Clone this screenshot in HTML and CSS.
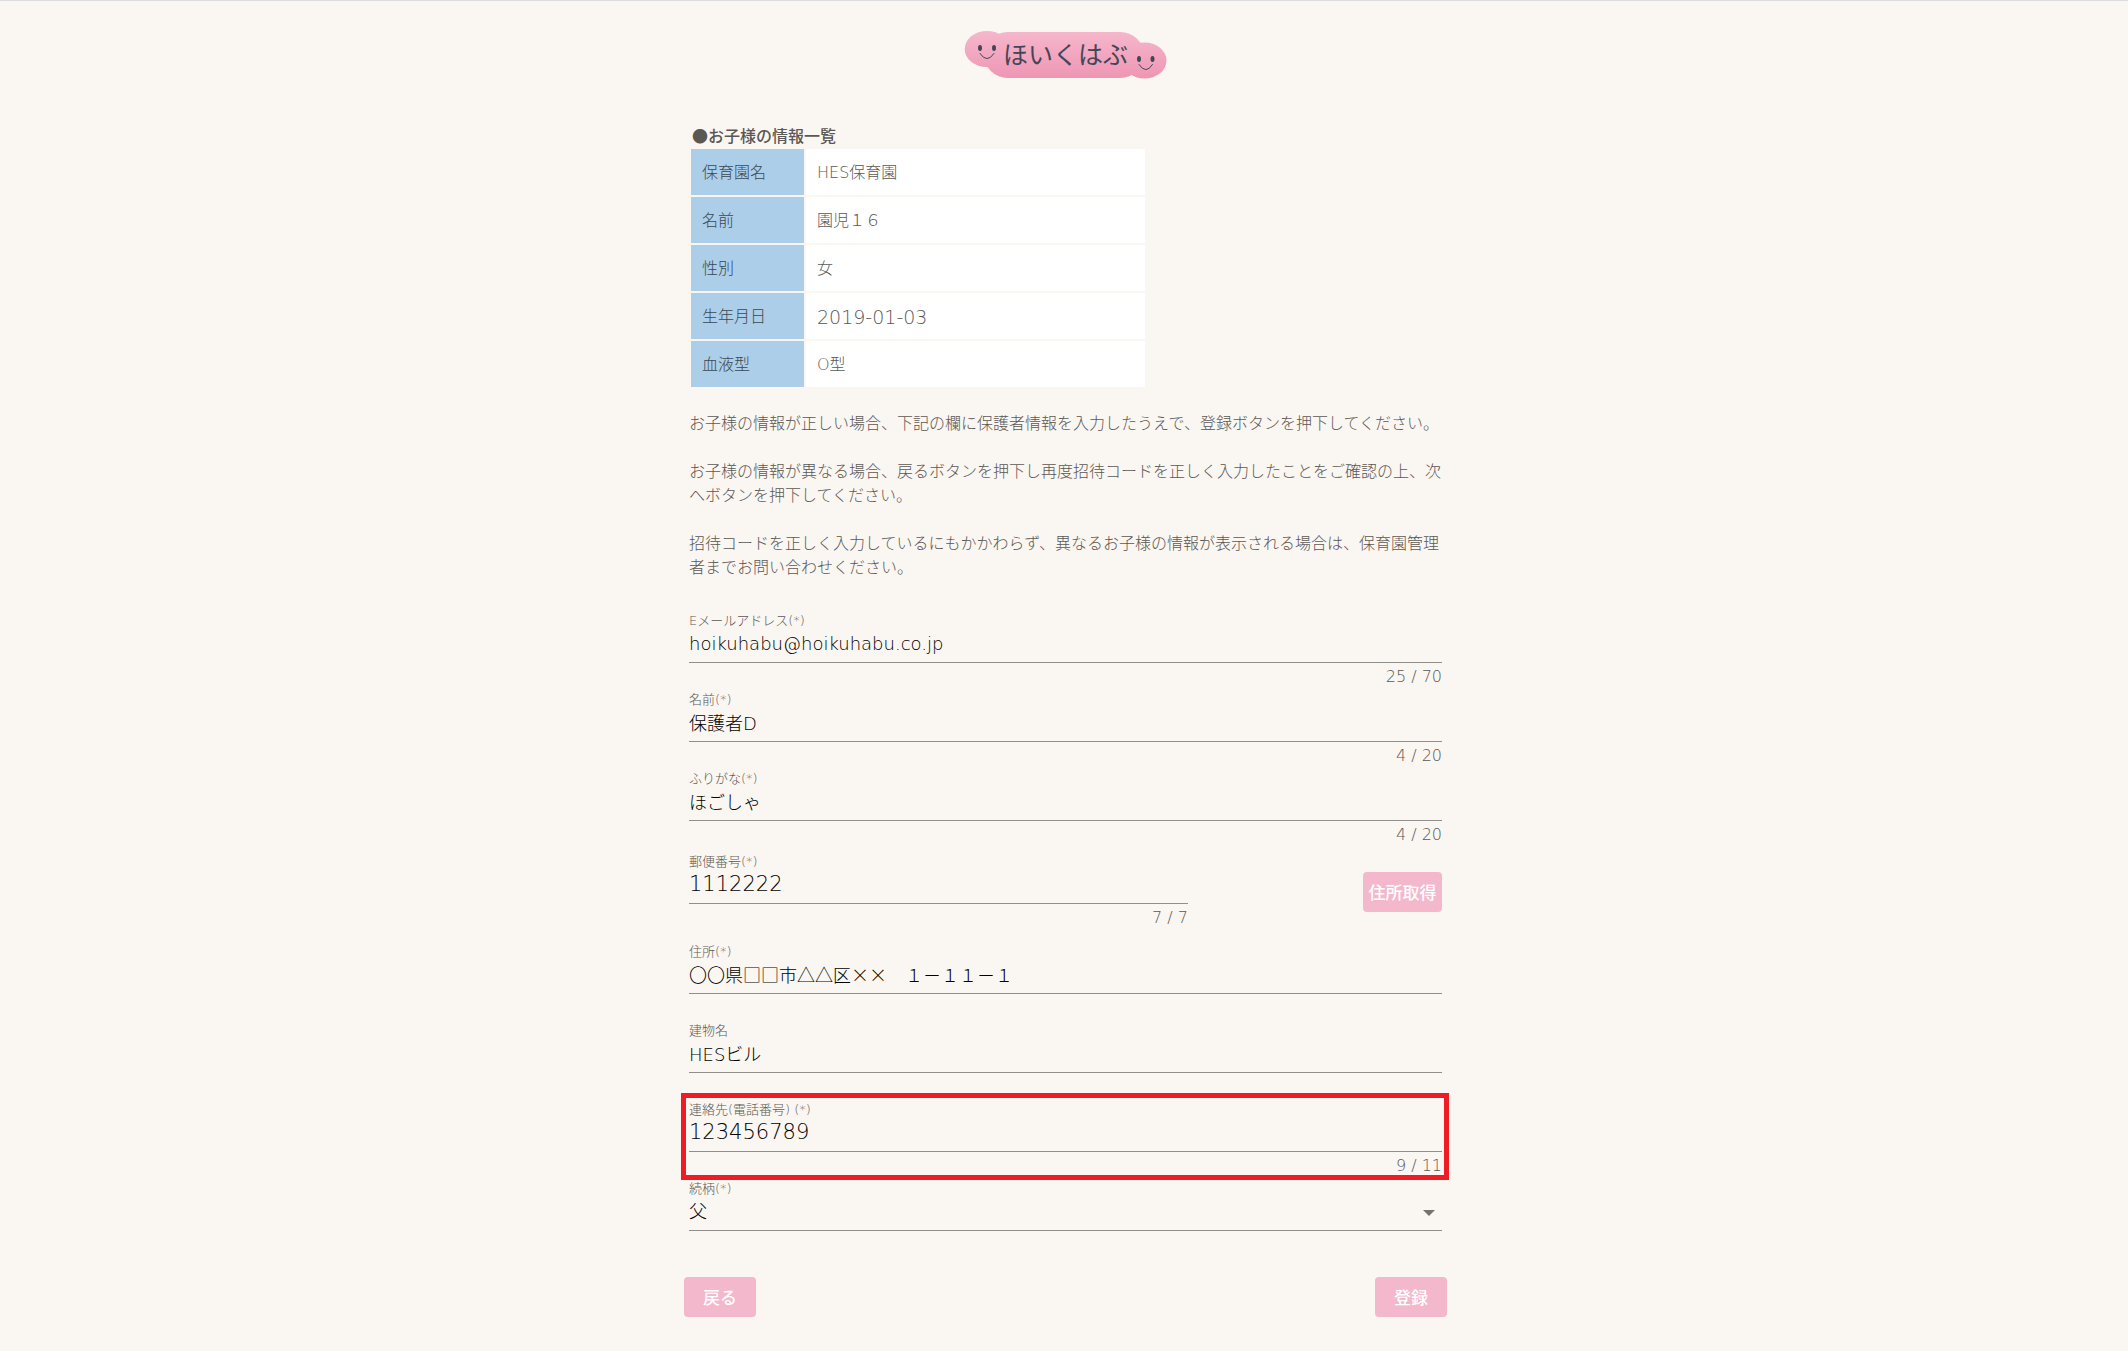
FILE: index.html
```html
<!DOCTYPE html>
<html lang="ja">
<head>
<meta charset="utf-8">
<title>ほいくはぶ</title>
<meta name="viewport" content="width=device-width, initial-scale=1">
<link rel="stylesheet" href="styles.css">
</head>
<body>
<header class="header">
  <svg class="logo" viewBox="0 0 206 50" role="img" aria-label="ほいくはぶ">
    <defs>
      <linearGradient id="pink" gradientUnits="userSpaceOnUse" x1="0" y1="0" x2="0" y2="50">
        <stop offset="0" stop-color="#f5b8cd"/>
        <stop offset="1" stop-color="#ee95b2"/>
      </linearGradient>
    </defs>
    <g fill="url(#pink)">
      <ellipse cx="26" cy="19" rx="22.3" ry="18"/>
      <rect x="23" y="2" width="160" height="46" rx="24" ry="23"/>
      <ellipse cx="183.5" cy="30.5" rx="22" ry="18"/>
    </g>
    <g fill="#434656">
      <ellipse cx="19" cy="18" rx="2" ry="3"/>
      <ellipse cx="33" cy="18" rx="2" ry="3"/>
      <ellipse cx="178" cy="29" rx="2" ry="3"/>
      <ellipse cx="191.500" cy="29" rx="2" ry="3"/>
    </g>
    <g fill="none" stroke="#434656" stroke-width="1" stroke-linecap="round">
      <path d="M19 23.500Q26 34 33 23.500"/>
      <path d="M178 34.500Q185 45 191.500 34.500"/>
    </g>
    <text class="logo-text" x="42" y="34">ほいくはぶ</text>
  </svg>
</header>
<main class="page">
  <section class="content">
    <h1 class="title">●お子様の情報一覧</h1>
    <table class="child">
      <tr><th scope="row">保育園名</th><td>HES保育園</td></tr>
      <tr><th scope="row">名前</th><td>園児１６</td></tr>
      <tr><th scope="row">性別</th><td>女</td></tr>
      <tr><th scope="row">生年月日</th><td class="date">2019-01-03</td></tr>
      <tr><th scope="row">血液型</th><td>O型</td></tr>
    </table>
    <div class="notes">
      <p>お子様の情報が正しい場合、下記の欄に保護者情報を入力したうえで、登録ボタンを押下してください。</p>
      <p>お子様の情報が異なる場合、戻るボタンを押下し再度招待コードを正しく入力したことをご確認の上、次へボタンを押下してください。</p>
      <p>招待コードを正しく入力しているにもかかわらず、異なるお子様の情報が表示される場合は、保育園管理者までお問い合わせください。</p>
    </div>
  </section>
  <form>
    <div class="content">
      <div class="field">
        <label for="email">Eメールアドレス(*)</label>
        <input id="email" type="text" value="hoikuhabu@hoikuhabu.co.jp">
        <span class="counter">25 / 70</span>
      </div>
      <div class="field">
        <label for="name">名前(*)</label>
        <input id="name" type="text" value="保護者D">
        <span class="counter">4 / 20</span>
      </div>
      <div class="field">
        <label for="kana">ふりがな(*)</label>
        <input id="kana" type="text" value="ほごしゃ">
        <span class="counter">4 / 20</span>
      </div>
      <div class="postal">
        <div class="field">
          <label for="zip">郵便番号(*)</label>
          <input id="zip" class="number" type="text" value="1112222">
          <span class="counter">7 / 7</span>
        </div>
        <button class="btn btn-lookup" type="button">住所取得</button>
      </div>
      <div class="field">
        <label for="address">住所(*)</label>
        <input id="address" class="wide" type="text" value="〇〇県□□市△△区××　１－１１－１">
      </div>
      <div class="field">
        <label for="building">建物名</label>
        <input id="building" type="text" value="HESビル">
      </div>
      <div class="field field-marked">
        <label for="tel">連絡先(電話番号) (*)</label>
        <input id="tel" class="number" type="text" value="123456789">
        <span class="counter">9 / 11</span>
      </div>
      <div class="field">
        <label for="relation">続柄(*)</label>
        <select id="relation"><option>父</option></select>
        <svg class="arrow" viewBox="0 0 12 6" aria-hidden="true"><path d="M0 0h12L6 6z" fill="#757370"/></svg>
      </div>
    </div>
    <div class="actions">
      <button class="btn" type="button">戻る</button>
      <button class="btn" type="submit">登録</button>
    </div>
  </form>
</main>
</body>
</html>
```
FILE: styles.css
```css
* {
  box-sizing: border-box;
}

body {
  margin: 0;
  border-top: 1px solid #dcdcdf;
  background: #faf6f1;
  color: #5a5855;
  font-family: "DejaVu Sans Light", "DejaVu Sans", "Noto Sans CJK JP", sans-serif;
  font-size: 16px;
  font-weight: 300;
  line-height: 24px;
}

.header {
  display: flex;
  justify-content: center;
  padding: 29px 0 43px;
}

.logo {
  width: 206px;
  height: 50px;
}

.logo-text {
  fill: #434656;
  font-family: "Noto Sans CJK JP", sans-serif;
  font-size: 25px;
  font-weight: 400;
}

.page {
  max-width: 766px;
  margin: 0 auto;
  padding-bottom: 32px;
}

.content {
  padding: 0 5px 0 8px;
}

.title {
  margin: 0;
  padding-left: 3px;
  font-family: "Noto Sans CJK JP", sans-serif;
  font-size: 16px;
  font-weight: 500;
  line-height: 24px;
}

.child {
  width: 458px;
  border-spacing: 2px;
}

.child th,
.child td {
  height: 46px;
  padding: 1px 11px 0;
  text-align: left;
  font-weight: 300;
}

.child th {
  width: 113px;
  background: #accee9;
  color: #3a4853;
}

.child td {
  background: #fff;
}

.child .date {
  font-size: 19px;
}

.notes {
  padding: 23px 0 31px;
}

.notes p {
  margin: 0 0 24px;
}

.notes p:last-child {
  margin-bottom: 0;
}

.field {
  display: flex;
  position: relative;
  flex-direction: column;
  height: 79px;
}

.field label {
  height: 20px;
  font-size: 13px;
  line-height: 20px;
}

.field input,
.field select {
  width: 100%;
  height: 32px;
  margin: 0;
  padding: 0 0 7px;
  border: 0;
  border-bottom: 1px solid #918f8b;
  border-radius: 0;
  outline: 0;
  appearance: none;
  background: transparent;
  color: #000;
  font-family: inherit;
  font-size: 18px;
  font-weight: 300;
}

.field .number {
  font-size: 21px;
}

.field .wide {
  font-family: "Noto Sans CJK JP", sans-serif;
}

.counter {
  line-height: 27px;
  text-align: right;
}

.postal {
  display: flex;
  justify-content: space-between;
  padding: 4px 0 11px;
}

.postal .field {
  width: 499px;
}

.field-marked::after {
  position: absolute;
  inset: -7px -7px -1px -8px;
  border: 5px solid #ee1c25;
  content: "";
  pointer-events: none;
}

.arrow {
  position: absolute;
  top: 31px;
  right: 7px;
  width: 12px;
  height: 6px;
  pointer-events: none;
}

.btn {
  width: 72px;
  height: 40px;
  padding: 0 0 2px;
  border: 0;
  border-radius: 4px;
  background: #f4b8cd;
  color: #fff;
  font-family: "Noto Sans CJK JP", sans-serif;
  font-size: 17px;
  font-weight: 500;
}

.btn-lookup {
  width: 79px;
  margin-top: 20px;
}

.actions {
  display: flex;
  justify-content: space-between;
  padding: 19px 0 0 3px;
}
```
